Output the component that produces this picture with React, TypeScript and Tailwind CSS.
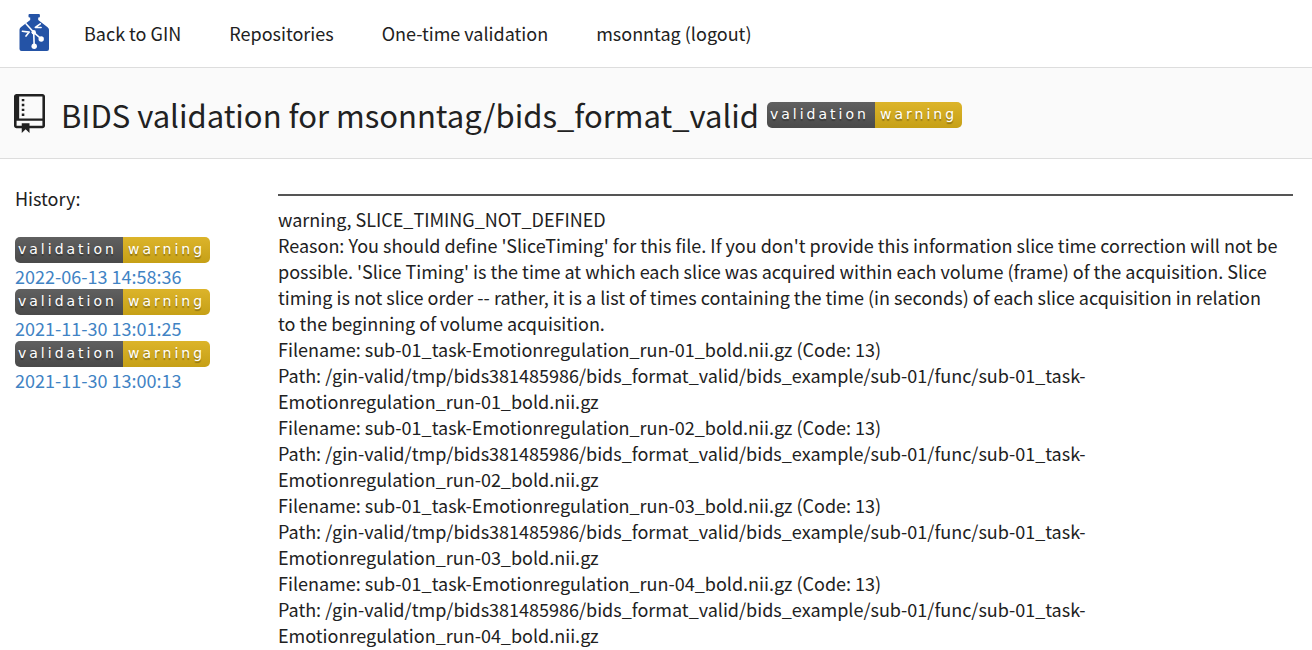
function Badge() {
  return (
    <span className="inline-flex h-[26px] shrink-0 overflow-hidden rounded-[5px] font-['DejaVu_Sans',sans-serif] text-[14px] leading-[25px] tracking-[3px] text-white [text-shadow:0_2px_1px_rgba(1,1,1,0.3)]">
      <span className="w-[108px] bg-linear-to-b from-[#606060] to-[#4a4a4a] pl-[3px]">validation</span>
      <span className="w-[87px] bg-linear-to-b from-[#dcb42a] to-[#c6a016] pl-[5px]">warning</span>
    </span>
  );
}

function Logo() {
  return (
    <svg width="30" height="39" viewBox="19 14 30 39" className="block">
      <path
        d="M29.5 14h9.4q1 0 1 1v1.6q0 .9-1 1h-.7V20l9.4 7.2q1.4 1.2 1.4 2.6V49q0 2-2 2H21.5q-2 0-2-2V29.8q0-1.5 1.3-2.6L30.2 20v-2.4h-.7q-1 0-1-1V15q0-1 1-1z"
        fill="#2453a6"
      />
      <g stroke="#fff" strokeWidth="1.6" fill="none" strokeLinecap="round" strokeLinejoin="round">
        <path d="M26 23.8l7.7 8.5 7.6 6.700M33.700 32.300l.5 14" />
        <path d="M40.300 23.800l-5 3.600 5.800.1M22.400 31.300l6.800.8-3.200 4" />
      </g>
      <circle cx="33.7" cy="32.3" r="2.2" fill="#fff" />
      <circle cx="34.2" cy="46.3" r="2.7" fill="#fff" />
      <circle cx="41.2" cy="39" r="2.7" fill="#fff" />
    </svg>
  );
}

const history = ["2022-06-13 14:58:36", "2021-11-30 13:01:25", "2021-11-30 13:00:13"];
const files = ["01", "02", "03", "04"].map((run) => `sub-01_task-Emotionregulation_run-${run}_bold.nii.gz`);
const folder = "/gin-valid/tmp/bids381485986/bids_format_valid/bids_example/sub-01/func/";

export default function App() {
  return (
    <div className="min-h-screen bg-white font-['Noto_Sans_CJK_SC',sans-serif] text-[18px] leading-[26px] text-[#212121]">
      <nav className="flex h-[68px] items-center border-b border-[#dddddd] pl-[19px]">
        <a href="#home" aria-label="Home" className="mr-[35px]">
          <Logo />
        </a>
        <div className="flex gap-12 pb-0.5">
          <a href="#gin">Back to GIN</a>
          <a href="#repositories">Repositories</a>
          <a href="#validate">One-time validation</a>
          <a href="#logout">msonntag (logout)</a>
        </div>
      </nav>
      <header className="flex h-[91px] items-center border-b border-[#dddddd] bg-[#fafafa] pl-[14px]">
        <svg width="31" height="39" viewBox="0 0 12 16" preserveAspectRatio="none" fill="#212121" className="mr-4 shrink-0">
          <path d="M4 9H3V8h1v1zm0-3H3v1h1V6zm0-2H3v1h1V4zm0-2H3v1h1V2zm8-1v12c0 .55-.45 1-1 1H6v2l-1.5-1.5L3 16v-2H1c-.55 0-1-.45-1-1V1c0-.55.45-1 1-1h10c.55 0 1 .45 1 1zm-1 10H1v2h2v-1h3v1h5v-2zm0-10H2v9h9V1z" />
        </svg>
        <div className="flex items-center gap-2 pt-1">
          <h1 className="text-[31px] leading-10">BIDS validation for msonntag/bids_format_valid</h1>
          <Badge />
        </div>
      </header>
      <main className="flex pl-[15px] pr-[19px]">
        <aside className="w-[263px] shrink-0 pt-[26px]">
          <h2>History:</h2>
          <ul className="mt-[26px]">
            {history.map((time) => (
              <li key={time}>
                <a href="#result" className="flex flex-col items-start text-[#4183c4]">
                  <Badge />
                  <span>{time}</span>
                </a>
              </li>
            ))}
          </ul>
        </aside>
        <section className="min-w-0 flex-1 pt-[35px]">
          <hr className="mb-[10px] border-t-2 border-[#555555]" />
          <div className="pr-3">
            <p>warning, SLICE_TIMING_NOT_DEFINED</p>
            <p>
              Reason: You should define 'SliceTiming' for this file. If you don't provide this information slice time
              correction will not be possible. 'Slice Timing' is the time at which each slice was acquired within each
              volume (frame) of the acquisition. Slice timing is not slice order -- rather, it is a list of times
              containing the time (in seconds) of each slice acquisition in relation to the beginning of volume
              acquisition.
            </p>
            {files.map((file) => (
              <div key={file}>
                <p>{`Filename: ${file} (Code: 13)`}</p>
                <p>{`Path: ${folder}${file}`}</p>
              </div>
            ))}
          </div>
        </section>
      </main>
    </div>
  );
}
